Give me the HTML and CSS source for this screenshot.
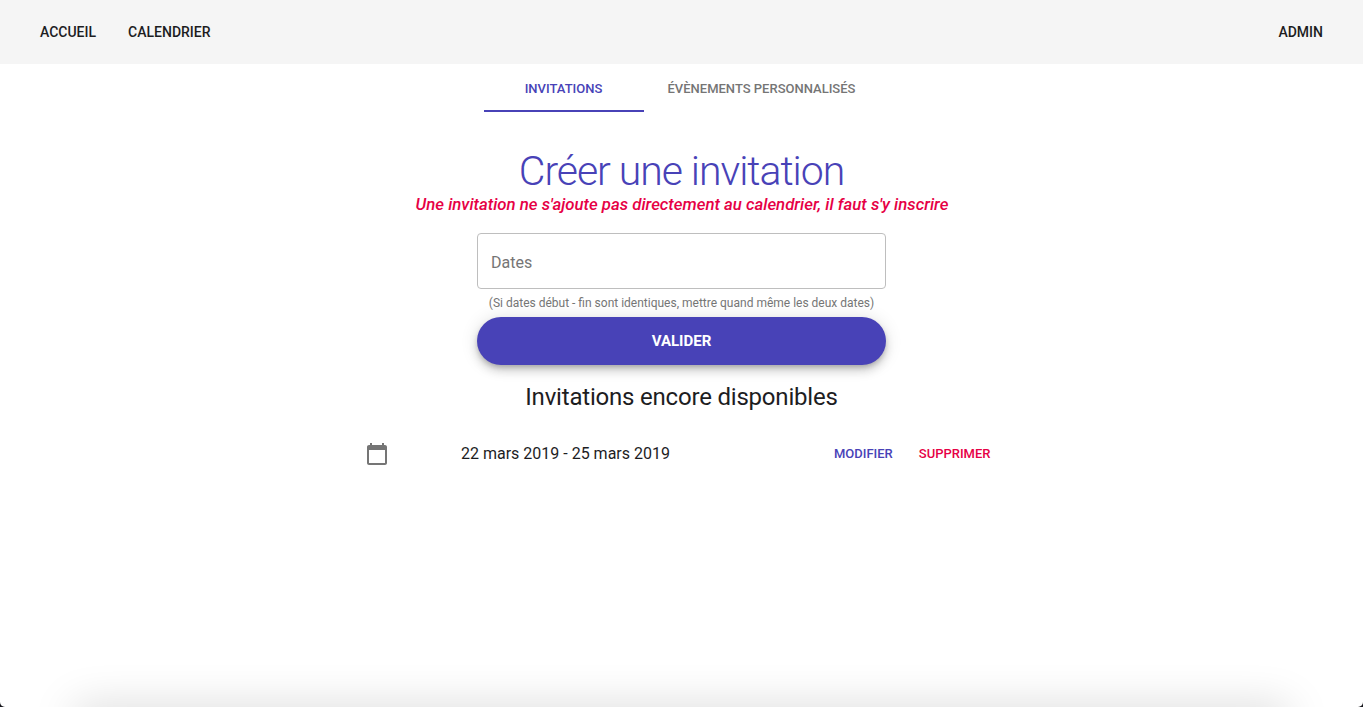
FILE: index.html
```html
<!DOCTYPE html>
<html lang="fr">
<head>
<meta charset="utf-8">
<title>Invitations</title>
<link rel="stylesheet" href="styles.css">
</head>
<body>
<div class="window">
  <header class="navbar">
    <nav class="nav-links">
      <a class="nav-link nav-home">Accueil</a>
      <a class="nav-link nav-calendar">Calendrier</a>
    </nav>
    <a class="nav-link nav-admin">Admin</a>
  </header>
  <div class="tabs" role="tablist">
    <button class="tab tab-active" role="tab"><span>Invitations</span></button>
    <button class="tab tab-custom" role="tab"><span>Évènements personnalisés</span></button>
  </div>
  <main class="content">
    <h1 class="title"><span>Créer une invitation</span></h1>
    <p class="notice"><span>Une invitation ne s'ajoute pas directement au calendrier, il faut s'y inscrire</span></p>
    <form class="form">
      <label class="field"><span>Dates</span></label>
      <p class="helper"><span>(Si dates début - fin sont identiques, mettre quand même les deux dates)</span></p>
      <button class="submit" type="button"><span>Valider</span></button>
    </form>
    <h2 class="subtitle"><span>Invitations encore disponibles</span></h2>
    <div class="item">
      <svg class="item-icon" viewBox="0 0 24 24"><path d="M20 3h-1V1h-2v2H7V1H5v2H4c-1.1 0-2 .9-2 2v16c0 1.1.9 2 2 2h16c1.1 0 2-.9 2-2V5c0-1.1-.9-2-2-2zm0 18H4V8h16v13z"/></svg>
      <span class="item-date">22 mars 2019 - 25 mars 2019</span>
      <div class="actions">
        <button class="action edit">Modifier</button>
        <button class="action delete">Supprimer</button>
      </div>
    </div>
  </main>
  <div class="bottom-shade"></div>
</div>
</body>
</html>
```
FILE: styles.css
```css
* { box-sizing: border-box; }
body {
  margin: 0;
  background: #16161c;
  font-family: Roboto, "Liberation Sans", sans-serif;
  color: #1d1d1f;
}
button {
  border: 0;
  padding: 0;
  background: none;
  font-family: inherit;
  text-transform: uppercase;
}
h1, h2, p { margin: 0; }
.window {
  position: relative;
  height: 707px;
  overflow: hidden;
  background: #fff;
  border-radius: 0 0 5px 5px;
}
.navbar {
  display: flex;
  align-items: center;
  justify-content: space-between;
  height: 64px;
  padding: 0 40px;
  background: #f5f5f5;
}
.nav-links { display: flex; gap: 32px; }
.nav-link {
  font-size: 14px;
  font-weight: 500;
  line-height: 24px;
  text-transform: uppercase;
}
.tabs { display: flex; height: 48px; padding-left: 484px; }
.tab {
  min-width: 160px;
  height: 48px;
  padding: 3px 1px 0 0;
  font-size: 13px;
  font-weight: 500;
  line-height: 16px;
  color: #757575;
  border-bottom: 2px solid transparent;
}
.tab-active { color: #4842b7; border-color: #4842b7; }
.tab-custom { padding: 3px 24px 0 23.5px; }
.content { display: flex; flex-direction: column; align-items: center; padding-top: 36px; }
.title {
  height: 46px;
  font-size: 41px;
  font-weight: 300;
  line-height: 46px;
  letter-spacing: -1.05px;
  color: #4842b7;
}
.notice {
  height: 20px;
  padding-left: 1px;
  font-size: 16.8px;
  font-style: italic;
  font-weight: 500;
  line-height: 20px;
  color: #e60045;
}
.form { width: 409px; margin-top: 19px; }
.field {
  display: flex;
  align-items: center;
  height: 56px;
  padding: 2px 13px 0;
  border: 1px solid #bebebe;
  border-radius: 4px;
  font-size: 16px;
  color: #757575;
}
.helper {
  height: 28px;
  font-size: 12px;
  line-height: 28px;
  text-align: center;
  color: #757575;
}
.submit {
  display: block;
  width: 100%;
  height: 48px;
  border-radius: 24px;
  background: #4842b7;
  box-shadow: 0 3px 5px -1px rgba(0,0,0,.2), 0 6px 10px rgba(0,0,0,.14), 0 1px 18px rgba(0,0,0,.12);
  color: #fff;
  font-size: 15px;
  font-weight: 700;
}
.subtitle {
  margin-top: 15px;
  height: 34px;
  font-size: 24px;
  font-weight: 400;
  line-height: 34px;
  letter-spacing: -0.2px;
}
.item {
  display: flex;
  align-items: center;
  width: 633px;
  height: 48px;
  margin-top: 16px;
}
.item-icon { width: 24px; height: 24px; fill: #757575; }
.item-date { margin-left: 72px; font-size: 16px; line-height: 24px; }
.actions { display: flex; gap: 26px; margin-left: auto; padding-right: 7.5px; }
.action { font-size: 13px; font-weight: 500; line-height: 22px; }
.edit { color: #4842b7; }
.delete { color: #e60045; }
.bottom-shade {
  position: absolute;
  left: 75px;
  right: 75px;
  bottom: -30px;
  height: 30px;
  box-shadow: 0 0 44px 0 rgba(0,0,0,.17);
}
```
